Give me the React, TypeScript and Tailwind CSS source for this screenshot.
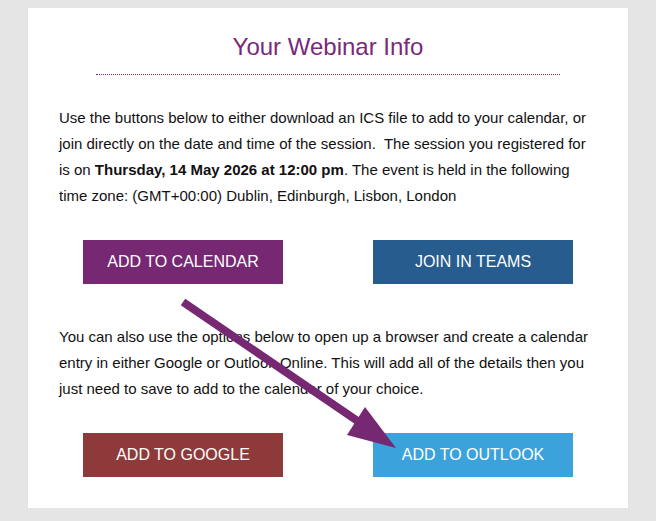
import React from "react";

function Btn({ label, color }: { label: string; color: string }) {
  return (
    <div className="flex justify-center">
      <a
        href="#"
        className={`flex h-[44px] w-[200px] items-center justify-center text-[16px] text-white ${color}`}
      >
        {label}
      </a>
    </div>
  );
}

export default function App() {
  return (
    <div
      className="relative h-[521px] w-[656px] overflow-hidden bg-[#e5e5e5] pt-[8px]"
      style={{ fontFamily: '"Liberation Sans", Arial, sans-serif' }}
    >
      <div className="ml-[28px] w-[600px] bg-white px-[10px] pb-[31px] pt-[22px]">
        <h1 className="text-center text-[24px] leading-[34px] text-[#782a7b]">Your Webinar Info</h1>
        <div className="mx-auto mt-[10px] w-[464px] border-t border-dotted border-[#782a7b]" />

        <p className="mt-[30px] px-[21px] text-[15px] leading-[26px] text-[#111]">
          Use the buttons below to either download an ICS file to add to your calendar, or join
          directly on the date and time of the session.&nbsp; The session you registered for is on{" "}
          <b>Thursday, 14 May 2026 at 12:00 pm</b>. The event is held in the following time zone:
          (GMT+00:00) Dublin, Edinburgh, Lisbon, London
        </p>

        <div className="mt-[31px] grid grid-cols-2">
          <Btn label="ADD TO CALENDAR" color="bg-[#762873]" />
          <Btn label="JOIN IN TEAMS" color="bg-[#265d8e]" />
        </div>

        <p className="mt-[40px] px-[21px] text-[15px] leading-[26px] text-[#111]">
          You can also use the options below to open up a browser and create a calendar entry in
          either Google or Outlook Online. This will add all of the details then you just need to
          save to add to the calendar of your choice.
        </p>

        <div className="mt-[31px] grid grid-cols-2">
          <Btn label="ADD TO GOOGLE" color="bg-[#8e3a3a]" />
          <Btn label="ADD TO OUTLOOK" color="bg-[#3ba2dc]" />
        </div>
      </div>

      {/* annotation arrow */}
      <svg
        className="pointer-events-none absolute left-0 top-0"
        width="656"
        height="521"
        viewBox="0 0 656 521"
      >
        <line x1="183" y1="302" x2="362" y2="424" stroke="#762873" strokeWidth="8" />
        <polygon points="396,448 347,435 365,407" fill="#762873" />
      </svg>
    </div>
  );
}
